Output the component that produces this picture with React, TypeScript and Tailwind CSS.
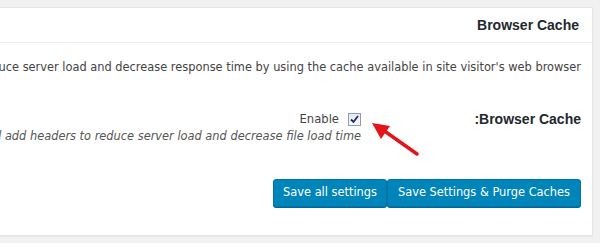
const body = "'DejaVu Sans', Verdana, sans-serif";
const head = "'Liberation Sans', Arial, sans-serif";

function Checkbox() {
  return (
    <span className="inline-flex h-[13px] w-[13px] items-center justify-center border border-[#8f9cb3] bg-gradient-to-b from-[#e4e8f0] to-[#fbfcfd] align-middle">
      <svg width="9" height="9" viewBox="0 0 9 9">
        <path d="M1 4.5 L3.5 7 L8 1" fill="none" stroke="#1d2a6b" strokeWidth="1.8" />
      </svg>
    </span>
  );
}

export default function App() {
  return (
    <div
      dir="rtl"
      className="relative h-[243px] w-[600px] overflow-hidden bg-[#f1f1f1] pt-[7px] pr-[7px]"
    >
      <div className="w-[1200px] border border-[#e5e5e5] bg-white shadow-[0_1px_1px_rgba(0,0,0,0.04)]">
        {/* title */}
        <div
          className="flex h-[35px] items-center border-b border-[#eeeeee] px-[13px] text-[14px] font-bold text-[#23282d]"
          style={{ fontFamily: head }}
        >
          Browser Cache
        </div>

        <div className="px-[11px] pt-[15px] pb-[28px]" style={{ fontFamily: body }}>
          <p className="whitespace-nowrap text-[11.4px] leading-[18px] text-[#444]">
            Reduce server load and decrease response time by using the cache available in site visitor's web browser
          </p>

          {/* option row */}
          <div className="mt-[34px] flex">
            <div
              className="w-[211px] shrink-0 text-[14px] font-bold leading-[18px] text-[#23282d]"
              style={{ fontFamily: head }}
            >
              Browser Cache:
            </div>
            <div className="pr-[9px]">
              <label className="flex items-center gap-[9px] whitespace-nowrap text-[11.6px] leading-[18px] text-[#444]">
                <Checkbox />
                Enable
              </label>
              <p className="whitespace-nowrap text-[11.4px] italic leading-[17px] text-[#555]">
                Enable HTTP compression and add headers to reduce server load and decrease file load time.
              </p>
            </div>
          </div>

          {/* actions */}
          <div className="mt-[34px] flex" style={{ fontFamily: body }}>
            <button className="h-[28px] rounded-[3px] border border-[#0073aa] bg-[#0085ba] px-[10px] text-[11.4px] text-white shadow-[0_1px_0_#006799]">
              Save Settings &amp; Purge Caches
            </button>
            <button className="h-[28px] rounded-[3px] border border-[#0073aa] bg-[#0085ba] px-[9px] text-[11.4px] text-white shadow-[0_1px_0_#006799]">
              Save all settings
            </button>
          </div>
        </div>
      </div>

      {/* annotation arrow */}
      <svg className="pointer-events-none absolute left-0 top-0" width="600" height="243">
        <line x1="417" y1="154" x2="383" y2="130" stroke="#e3151b" strokeWidth="3.5" strokeLinecap="round" />
        <polygon points="372,123 390,126 381,139" fill="#e3151b" />
      </svg>
    </div>
  );
}
